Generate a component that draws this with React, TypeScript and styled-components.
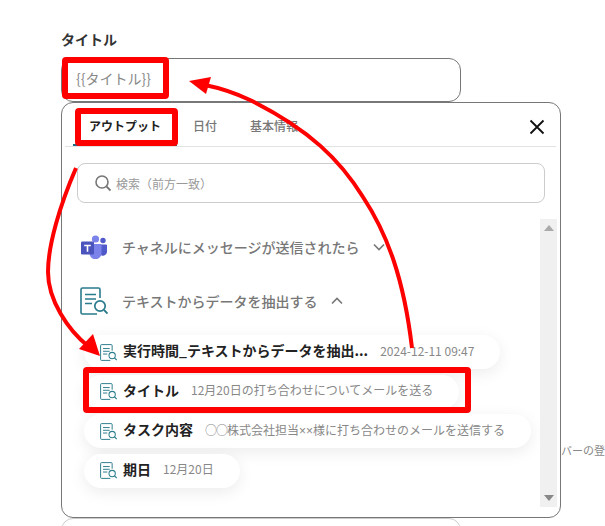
import React from "react";
import styled, { createGlobalStyle } from "styled-components";

const Global = createGlobalStyle`
  html, body { margin: 0; padding: 0; background: #fff; overflow: hidden; }
  body { font-family: "Noto Sans CJK JP", "Noto Sans", sans-serif; }
`;
const Page = styled.div`
  position: relative; width: 605px; height: 526px; overflow: hidden;
  padding: 29px 0 0 61px; box-sizing: border-box;
`;
const Label = styled.div`
  height: 29px; line-height: 20px; font-size: 14px; font-weight: 700; color: #333;
`;
const Field = styled.div<{ $muted?: boolean }>`
  width: 400px; height: 44px; box-sizing: border-box; flex: none;
  border: 1px solid ${(p) => (p.$muted ? "#ccc" : "#777")}; border-radius: 12px;
  display: flex; align-items: center; padding: 0 14px 5px;
  font-size: 14px; color: #888;
`;
const PopupRow = styled.div`
  display: flex; align-items: flex-start;
`;
const Popup = styled.div`
  width: 500px; height: 416px; box-sizing: border-box; flex: none;
  border: 1px solid #777; border-radius: 12px; background: #fff;
  display: flex; flex-direction: column;
`;
const SideText = styled.div`
  flex: none; margin-top: 338px; font-size: 11px; line-height: 20px; color: #888; white-space: nowrap;
`;
const Tabs = styled.div`
  height: 44px; box-sizing: border-box; flex: none; margin: 0 4px 0 3px; padding-left: 8px;
  border-bottom: 1px solid #e2e2e2; display: flex; align-items: stretch;
`;
const Tab = styled.div<{ $active?: boolean }>`
  padding: ${(p) => (p.$active ? "3px 16px 0" : "2px 0 0")};
  margin-right: ${(p) => (p.$active ? "16px" : "33px")};
  display: flex; align-items: center; font-size: 12px;
  font-weight: ${(p) => (p.$active ? 700 : 500)};
  color: ${(p) => (p.$active ? "#222" : "#777")};
  border-bottom: ${(p) => (p.$active ? "2px solid #1b6d85" : "0")};
`;
const Close = styled.div`
  margin-left: auto; width: 38px; display: flex; align-items: center; justify-content: center; padding-top: 5px;
`;
const Search = styled.div`
  flex: none; height: 40px; box-sizing: border-box; margin: 16px 15px 0;
  border: 1px solid #ccc; border-radius: 8px; display: flex; align-items: center; gap: 4px;
  padding-left: 16px; font-size: 12px; color: #999;
`;
const Body = styled.div`
  margin-top: 16px; height: 288px; display: flex; padding-right: 3px; flex: none;
`;
const List = styled.div`
  flex: 1; min-width: 0; padding: 1px 0 0 18px;
`;
const Section = styled.div`
  height: 54px; display: flex; align-items: center; font-size: 14px; font-weight: 500; color: #777;
`;
const SectionIcon = styled.div`
  width: 27px; margin-right: 15px; display: flex; justify-content: center; flex: none;
`;
const Chevron = styled.svg`
  margin-left: 12px; flex: none;
`;
const Pills = styled.div`
  margin: 7px 0 0 4px; display: flex; flex-direction: column; align-items: flex-start; gap: 5.5px;
`;
const Pill = styled.div`
  height: 34px; box-sizing: border-box; border-radius: 17px; background: #fff; white-space: nowrap;
  box-shadow: 0 4px 16px rgba(0, 0, 0, 0.08);
  display: flex; align-items: center; padding: 0 26px 0 16px;
`;
const PillName = styled.span`
  margin-left: 6px; padding-bottom: 4px; font-size: 14px; font-weight: 700; color: #222;
`;
const PillValue = styled.span`
  margin-left: 12px; padding-bottom: 4px; font-size: 12px; color: #888;
`;
const Narrow = styled.span`
  font-family: "Liberation Sans", sans-serif;
`;
const Circles = styled.span`
  letter-spacing: -1px;
`;
const Scroll = styled.div`
  width: 17px; flex: none; background: #f0f0f0; display: flex; flex-direction: column;
  justify-content: space-between; align-items: center; padding: 6px 0; box-sizing: border-box;
`;
const Overlay = styled.svg`
  position: absolute; left: 0; top: 0; pointer-events: none;
`;

const TEAL = "#2a7b8c";

const DocIcon = ({ size = 17 }: { size?: number }) => (
  <svg width={size} height={size} viewBox="0 0 28 28" fill="none" style={{ flex: "none" }}>
    <path d="M17 27H2.5A1.5 1.5 0 0 1 1 25.5V2.5A1.5 1.5 0 0 1 2.5 1h16A1.5 1.5 0 0 1 20 2.5V11" stroke={TEAL} strokeWidth="1.6" />
    <path d="M5 7.5h11M5 12h11M5 16.5h7" stroke={TEAL} strokeWidth="1.6" />
    <circle cx="20" cy="19" r="5.2" fill="#fff" stroke={TEAL} strokeWidth="1.7" />
    <path d="M24 23l3.5 3.5" stroke={TEAL} strokeWidth="1.8" />
  </svg>
);

const TeamsIcon = () => (
  <svg width="26" height="24" viewBox="0 0 26 24">
    <circle cx="14.5" cy="4" r="3.6" fill="#7b83eb" />
    <circle cx="22" cy="5.5" r="2.7" fill="#5059c9" />
    <path d="M18.5 9.5H25a1 1 0 0 1 1 1v6a4.2 4.2 0 0 1-7.500 2.600z" fill="#5059c9" />
    <path d="M8 9h11.500a1 1 0 0 1 1 1v8a6 6 0 0 1-12 .5z" fill="#7b83eb" />
    <rect x="0" y="6.500" width="13" height="13" rx="1.300" fill="#4b53bc" />
    <path d="M3.200 9.800h6.600v1.500H7.300v5.500H5.700v-5.500H3.200z" fill="#fff" />
  </svg>
);

const Pillrow = ({ name, value }: { name: string; value: React.ReactNode }) => (
  <Pill>
    <DocIcon />
    <PillName>{name}</PillName>
    <PillValue>{value}</PillValue>
  </Pill>
);

export default function App() {
  return (
    <Page>
      <Global />
      <Label>タイトル</Label>
      <Field>{"{{タイトル}}"}</Field>
      <PopupRow>
        <Popup>
          <Tabs>
            <Tab $active>アウトプット</Tab>
            <Tab>日付</Tab>
            <Tab>基本情報</Tab>
            <Close>
              <svg width="16" height="16" viewBox="0 0 16 16">
                <path d="M1.500 1.500l13 13M14.500 1.500l-13 13" stroke="#111" strokeWidth="1.800" />
              </svg>
            </Close>
          </Tabs>
          <Search>
            <svg width="18" height="18" viewBox="0 0 18 18" fill="none">
              <circle cx="8" cy="8" r="6" stroke="#777" strokeWidth="1.600" />
              <path d="M12.500 12.500l4 4" stroke="#777" strokeWidth="1.800" />
            </svg>
            検索（前方一致）
          </Search>
          <Body>
            <List>
              <Section>
                <SectionIcon><TeamsIcon /></SectionIcon>
                チャネルにメッセージが送信されたら
                <Chevron width="14" height="10" viewBox="0 0 14 10" fill="none">
                  <path d="M2 2.500l5 5 5-5" stroke="#777" strokeWidth="1.600" />
                </Chevron>
              </Section>
              <Section>
                <SectionIcon><DocIcon size={28} /></SectionIcon>
                テキストからデータを抽出する
                <Chevron width="14" height="10" viewBox="0 0 14 10" fill="none">
                  <path d="M2 7.500l5-5 5 5" stroke="#777" strokeWidth="1.600" />
                </Chevron>
              </Section>
              <Pills>
                <Pillrow name="実行時間_テキストからデータを抽出..." value="2024-12-11 09:47" />
                <Pillrow name="タイトル" value="12月20日の打ち合わせについてメールを送る" />
                <Pillrow
                  name="タスク内容"
                  value={<><Circles>○○</Circles>株式会社担当<Narrow>××</Narrow>様に打ち合わせのメールを送信する</>}
                />
                <Pillrow name="期日" value="12月20日" />
              </Pills>
            </List>
            <Scroll>
              <svg width="10" height="6" viewBox="0 0 10 6"><path d="M0 6L5 0l5 6z" fill="#aaa" /></svg>
              <svg width="10" height="6" viewBox="0 0 10 6"><path d="M0 0l5 6 5-6z" fill="#888" /></svg>
            </Scroll>
          </Body>
        </Popup>
        <SideText>バーの登</SideText>
      </PopupRow>
      <Field $muted />
      <Overlay width="605" height="526" viewBox="0 0 605 526" fill="none">
        <g stroke="#f00" strokeWidth="6" strokeLinejoin="round">
          <rect x="65" y="60" width="101" height="36" rx="1" />
          <rect x="78" y="111" width="97" height="32" rx="1" />
          <rect x="86" y="370" width="382" height="40" rx="1" />
        </g>
        <g stroke="#f00" strokeWidth="4" strokeLinecap="butt">
          <path d="M412 348C404 280 388 235 363 197C340 160 310 130 250 100C235 93 220 88 205 85" />
          <path d="M76 168C60 205 48 245 48 272C48 300 68 330 88 346" />
        </g>
        <path d="M189 81L211 77L206 94z" fill="#f00" />
        <path d="M100 356L79 349L93 334z" fill="#f00" />
      </Overlay>
    </Page>
  );
}
